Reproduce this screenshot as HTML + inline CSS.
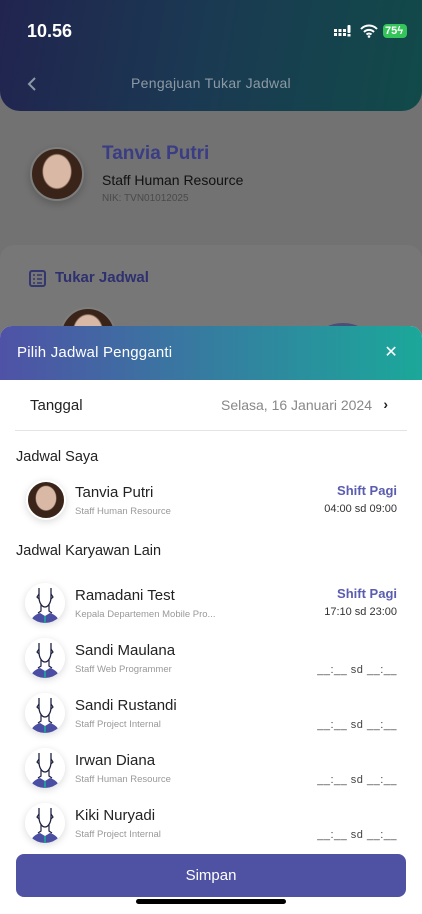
<!DOCTYPE html>
<html><head><meta charset="utf-8"><style>
*{margin:0;padding:0;box-sizing:border-box}
body{width:422px;height:914px;position:relative;overflow:hidden;background:#727272;font-family:"Liberation Sans",sans-serif}
.abs{position:absolute}
.hdr{left:0;top:0;width:422px;height:111px;border-radius:0 0 20px 20px;background:linear-gradient(100deg,#21244f 0%,#1a3a52 50%,#114a49 100%)}
.face{border-radius:50%;overflow:hidden;background:radial-gradient(ellipse 30% 36% at 50% 45%,#d9b9a5 0 90%,#3a2419 100%) ,#3a2419}
.sheet{left:0;top:326px;width:422px;height:588px;background:#fff;border-radius:12px 12px 0 0;overflow:hidden}
.sh{height:54px;background:linear-gradient(90deg,#4f52a6,#1ba89a);color:#fff;font-size:15px;padding:18px 0 0 17px;letter-spacing:.2px}
.row{position:absolute;left:0;width:422px;height:50px}
.av{position:absolute;left:25px;top:0;width:40px;height:40px;border-radius:50%;background:#fff;box-shadow:0 2px 8px rgba(0,0,0,.15);overflow:hidden}
.nm{position:absolute;left:75px;top:4px;font-size:15px;color:#222}
.sub{position:absolute;left:75px;top:26px;font-size:9.5px;color:#999}
.sp{position:absolute;right:25px;top:3px;font-size:13px;color:#5a5cb0;font-weight:bold}
.tm{position:absolute;right:25px;top:23px;font-size:11px;color:#333}
.dash{position:absolute;right:25px;top:26px;font-size:11px;color:#444;letter-spacing:.5px}
</style></head><body>
<div class="abs hdr"></div>
<div class="abs" style="left:27px;top:21px;color:#fff;font-size:18px;font-weight:bold">10.56</div>
<svg class="abs" style="left:334px;top:24px" width="20" height="14"><g fill="#fff"><rect x="0" y="9" width="3" height="3"/><rect x="0" y="5" width="3" height="3"/><rect x="4.5" y="9" width="3" height="3"/><rect x="4.5" y="5" width="3" height="3"/><rect x="9" y="9" width="3" height="3"/><rect x="9" y="5" width="3" height="3"/><rect x="13.5" y="1" width="3" height="8" rx="1"/><rect x="13.5" y="10" width="3" height="2.5"/></g></svg>
<svg class="abs" style="left:360px;top:24px" width="18" height="14" viewBox="0 0 18 14"><path d="M1 5a11 11 0 0 1 16 0M4 8a7 7 0 0 1 10 0M6.5 10.5a3.5 3.5 0 0 1 5 0" stroke="#fff" stroke-width="2" fill="none"/><circle cx="9" cy="12.5" r="1.3" fill="#fff"/></svg>
<div class="abs" style="left:383px;top:24px;width:24px;height:14px;background:#34c45a;border-radius:4px;color:#fff;font-size:11px;font-weight:bold;line-height:14px;padding-left:2px">75ϟ</div>
<svg class="abs" style="left:26px;top:76px" width="12" height="16"><path d="M9 2L3 8l6 6" stroke="#8a9aa6" stroke-width="2" fill="none"/></svg>
<div class="abs" style="left:0;width:422px;top:75px;text-align:center;color:#8c9aa5;font-size:14px;letter-spacing:.3px">Pengajuan Tukar Jadwal</div>
<div class="abs face" style="left:30px;top:147px;width:54px;height:54px;border:2px solid #7d7d7d;box-shadow:0 3px 8px rgba(0,0,0,.2)"></div>
<div class="abs" style="left:102px;top:143px;color:#3b3d84;font-size:19px;font-weight:bold">Tanvia Putri</div>
<div class="abs" style="left:102px;top:172px;color:#111;font-size:14px">Staff Human Resource</div>
<div class="abs" style="left:102px;top:193px;color:#4a4a4a;font-size:10px">NIK: TVN01012025</div>
<div class="abs" style="left:0;top:245px;width:422px;height:100px;background:#777;border-radius:14px"></div>
<svg class="abs" style="left:29px;top:270px" width="17" height="17"><rect x="1" y="1" width="15" height="15" rx="2" fill="none" stroke="#33366f" stroke-width="2"/><path d="M4 5h2M8 5h5M4 9h2M8 9h5M4 13h2M8 13h5" stroke="#33366f" stroke-width="1.6"/></svg>
<div class="abs" style="left:55px;top:269px;color:#2e3070;font-size:15px;font-weight:bold">Tukar Jadwal</div>
<div class="abs face" style="left:60px;top:307px;width:56px;height:56px;border:2px solid #7d7d7d"></div>
<div class="abs" style="left:318px;top:323px;width:50px;height:30px;border-radius:50%;background:#4a4f7a"></div>

<div class="abs sheet">
<div class="sh">Pilih Jadwal Pengganti<span style="position:absolute;right:24px;top:16px;font-size:16px">✕</span></div>
<div class="abs" style="left:30px;top:71px;font-size:15px;color:#222">Tanggal</div>
<div class="abs" style="right:50px;top:71px;font-size:14px;color:#888">Selasa, 16 Januari 2024</div>
<div class="abs" style="right:34px;top:70px;font-size:14px;color:#222;font-weight:bold">›</div>
<div class="abs" style="left:15px;top:104px;width:392px;height:1px;background:#e3e3e3"></div>
<div class="abs" style="left:16px;top:123px;font-size:14.5px;color:#222">Jadwal Saya</div>
<div class="row" style="top:154px"><div class="abs face" style="left:26px;top:0;width:40px;height:40px;border:2px solid #fff;box-shadow:0 2px 8px rgba(0,0,0,.15)"></div><div class="nm">Tanvia Putri</div><div class="sub">Staff Human Resource</div><div class="sp">Shift Pagi</div><div class="tm">04:00 sd 09:00</div></div>
<div class="abs" style="left:16px;top:217px;font-size:14.5px;color:#222">Jadwal Karyawan Lain</div>

<svg width="0" height="0" style="position:absolute"><defs><g id="p"><rect width="40" height="40" fill="#fff"/><path d="M5 40c2-7 7-9 10-10l5 3l5-3c3 1 8 3 10 10z" fill="#4b4fa3"/><path d="M20 33v7" stroke="#1ba89a" stroke-width="1.6"/><path d="M14 5v9c0 6 3 10 6 10s6-4 6-10V5" fill="none" stroke="#1e2240" stroke-width="1.3"/><path d="M14 11l-2 3l2 2M26 11l2 3l-2 2M16 22v6l-3 2M24 22v6l3 2" fill="none" stroke="#1e2240" stroke-width="1.2"/></g></defs></svg>

<div class="row" style="top:257px"><div class="av"><svg width="40" height="40"><use href="#p"/></svg></div><div class="nm">Ramadani Test</div><div class="sub">Kepala Departemen Mobile Pro...</div><div class="sp">Shift Pagi</div><div class="tm">17:10 sd 23:00</div></div>
<div class="row" style="top:312px"><div class="av"><svg width="40" height="40"><use href="#p"/></svg></div><div class="nm">Sandi Maulana</div><div class="sub">Staff Web Programmer</div><div class="dash">__:__ sd __:__</div></div>
<div class="row" style="top:367px"><div class="av"><svg width="40" height="40"><use href="#p"/></svg></div><div class="nm">Sandi Rustandi</div><div class="sub">Staff Project Internal</div><div class="dash">__:__ sd __:__</div></div>
<div class="row" style="top:422px"><div class="av"><svg width="40" height="40"><use href="#p"/></svg></div><div class="nm">Irwan Diana</div><div class="sub">Staff Human Resource</div><div class="dash">__:__ sd __:__</div></div>
<div class="row" style="top:477px"><div class="av"><svg width="40" height="40"><use href="#p"/></svg></div><div class="nm">Kiki Nuryadi</div><div class="sub">Staff Project Internal</div><div class="dash">__:__ sd __:__</div></div>
</div>
<div class="abs" style="left:16px;top:854px;width:390px;height:43px;background:#4f52a3;border-radius:8px;color:#fff;font-size:15px;text-align:center;line-height:43px">Simpan</div>
<div class="abs" style="left:136px;top:899px;width:150px;height:5px;background:#000;border-radius:3px"></div>
</body></html>
